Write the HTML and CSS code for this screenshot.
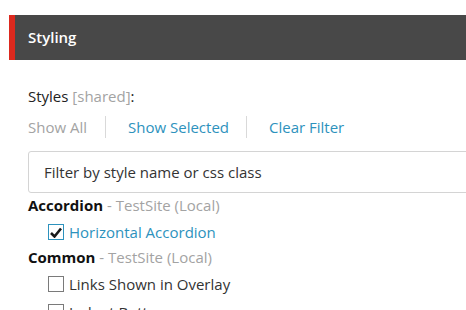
FILE: index.html
```html
<!DOCTYPE html>
<html lang="en">
<head>
    <meta charset="UTF-8">
    <title>Styling</title>
    <link rel="stylesheet" href="styles.css">
</head>
<body>
    <div class="panel-header">Styling</div>

    <div class="panel-body">
        <div class="field-label">Styles <span class="muted">[shared]</span>:</div>

        <div class="filter-links">
            <span class="filter-link disabled">Show All</span>
            <span class="filter-link">Show Selected</span>
            <span class="filter-link">Clear Filter</span>
        </div>

        <input class="filter-input" type="text" placeholder="Filter by style name or css class">

        <div class="group-title"><strong>Accordion</strong> <span class="muted">- TestSite (Local)</span></div>
        <label class="style-option checked">
            <span class="check-box">
                <svg width="12" height="11" viewBox="0 0 12 11"><path d="M1 6 L4.5 9.5 L11 1.5" fill="none" stroke="#1a1a1a" stroke-width="2.6"/></svg>
            </span>
            Horizontal Accordion
        </label>

        <div class="group-title"><strong>Common</strong> <span class="muted">- TestSite (Local)</span></div>
        <label class="style-option">
            <span class="check-box"></span>
            Links Shown in Overlay
        </label>
        <label class="style-option">
            <span class="check-box"></span>
            Indent Bottom
        </label>
    </div>
</body>
</html>
```

FILE: styles.css
```css
body {
    margin: 0;
    font-family: "Open Sans", "Segoe UI", sans-serif;
    font-size: 15px;
    color: #222;
    background: #fff;
    overflow: hidden;
}
.panel-header {
    margin: 15px 0 0 9px;
    height: 45px;
    line-height: 45px;
    background: #484848;
    border-left: 6px solid #dc291e;
    padding-left: 13px;
    color: #fff;
    font-weight: 600;
    font-size: 15px;
}
.panel-body {
    padding: 26px 0 0 28px;
}
.field-label {
    line-height: 20px;
}
.muted { color: #a3a3a3; }
.filter-links {
    display: flex;
    align-items: center;
    margin-top: 10px;
    height: 22px;
}
.filter-link {
    color: #2d92bd;
    padding: 0 17px 0 22px;
    border-left: 1px solid #d9d9d9;
    line-height: 22px;
}
.filter-link:first-child {
    padding-left: 0;
    padding-right: 18px;
    border-left: none;
}
.filter-link.disabled { color: #a3a3a3; }
.filter-input {
    display: block;
    box-sizing: border-box;
    margin-top: 13px;
    width: 460px;
    height: 42px;
    border: 1px solid #d4d4d4;
    border-radius: 3px;
    padding: 0 15px;
    font: inherit;
    color: #333;
}
.filter-input::placeholder { color: #333; }
.group-title {
    margin-top: 0;
    line-height: 24px;
}
.group-title strong { font-weight: 700; color: #111; }
.style-option {
    display: flex;
    align-items: center;
    margin: 2px 0 0 20px;
    height: 26px;
    color: #333;
}
.style-option.checked { color: #2d92bd; }
.check-box {
    box-sizing: border-box;
    width: 16px;
    height: 16px;
    border: 1px solid #7a7a7a;
    margin-right: 5px;
    display: flex;
    align-items: center;
    justify-content: center;
    background: #fff;
}
.style-option.checked .check-box { border-color: #2d92bd; }
```
